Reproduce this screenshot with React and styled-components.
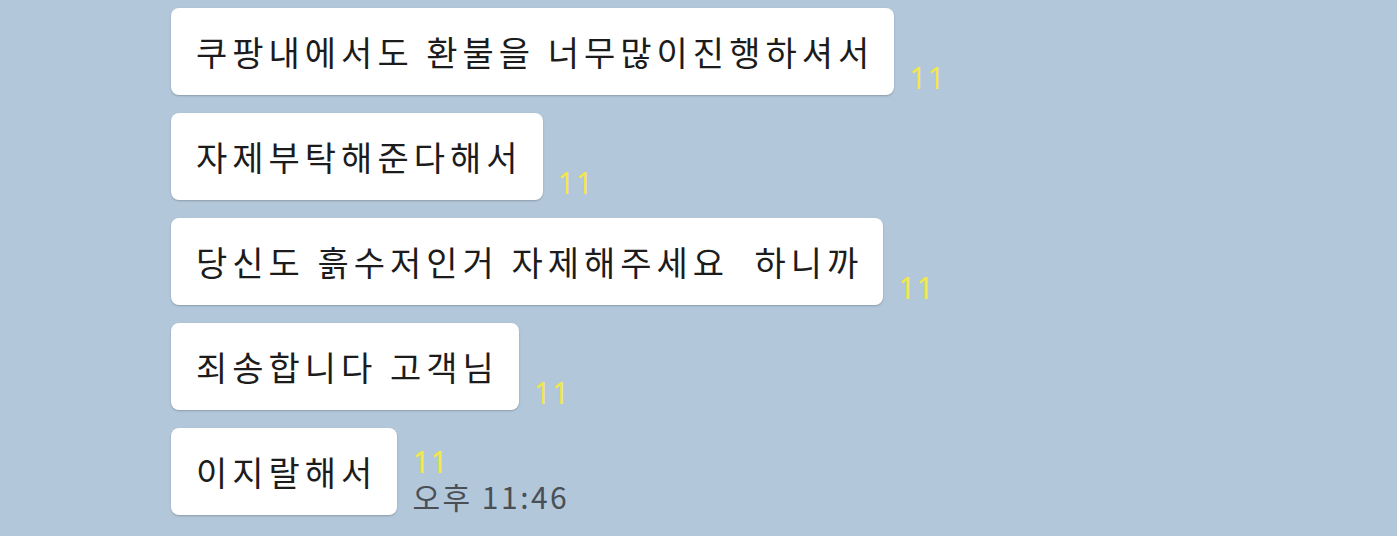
import React from 'react'
import styled, { createGlobalStyle } from 'styled-components'

const messages = [
  '쿠팡내에서도 환불을 너무많이진행하셔서',
  '자제부탁해준다해서',
  '당신도 흙수저인거 자제해주세요  하니까',
  '죄송합니다 고객님',
  '이지랄해서',
]

const GlobalStyle = createGlobalStyle`
  html, body {
    margin: 0;
    padding: 0;
    background: #b2c7da;
    font-family: "Noto Sans CJK KR", "Noto Sans", sans-serif;
  }
`

const Chat = styled.div`
  display: flex;
  flex-direction: column;
  gap: 18px;
  padding: 8px 0 0 171px;
  height: 528px;
  overflow: hidden;
`

const Row = styled.div`
  display: flex;
  align-items: flex-end;
`

const Bubble = styled.div`
  background: #fff;
  border-radius: 8px;
  box-shadow: 0 1px 2px rgba(0, 0, 0, 0.22);
  height: 87px;
  box-sizing: border-box;
  padding: 0 20px 0 25px;
  display: flex;
  align-items: center;
  font-size: 34px;
  letter-spacing: 5px;
  color: #1c1c1c;
  white-space: pre;
`

const Meta = styled.div`
  display: flex;
  flex-direction: column;
  margin-left: 15px;
  margin-bottom: 2px;
`

const ReadCount = styled.span`
  font-family: "Noto Sans", sans-serif;
  font-size: 30px;
  line-height: 30px;
  letter-spacing: 1px;
  color: #f2e74b;
`

const Time = styled.span`
  font-size: 30px;
  line-height: 34px;
  margin-top: 2px;
  letter-spacing: 2.5px;
  color: #4a4f55;
`

export default function App() {
  return (
    <>
      <GlobalStyle />
      <Chat>
        {messages.map((text, i) => (
          <Row key={i}>
            <Bubble>{text}</Bubble>
            <Meta>
              <ReadCount>11</ReadCount>
              {i === messages.length - 1 && <Time>오후 11:46</Time>}
            </Meta>
          </Row>
        ))}
      </Chat>
    </>
  )
}
